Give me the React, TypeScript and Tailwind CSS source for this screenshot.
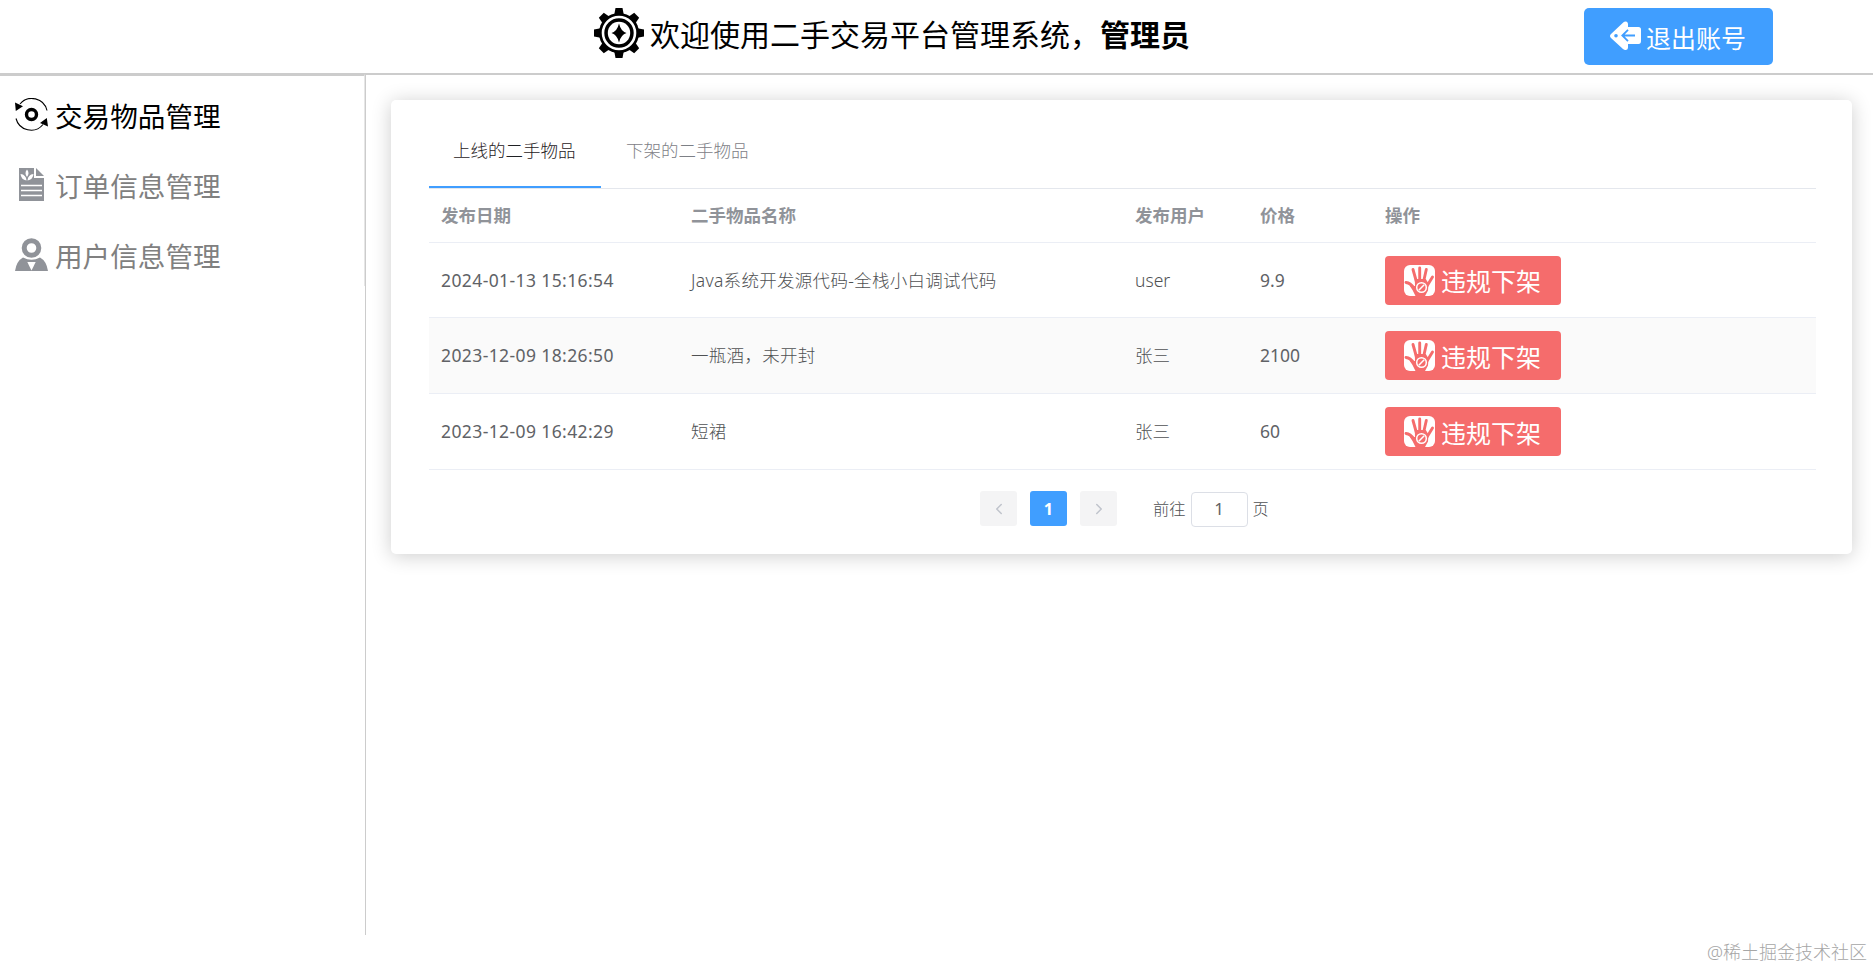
import { ChevronLeft, ChevronRight } from 'lucide-react';

const items = [
  {
    date: '2024-01-13 15:16:54',
    name: 'Java系统开发源代码-全栈小白调试代码',
    user: 'user',
    price: '9.9',
  },
  {
    date: '2023-12-09 18:26:50',
    name: '一瓶酒，未开封',
    user: '张三',
    price: '2100',
  },
  { date: '2023-12-09 16:42:29', name: '短裙', user: '张三', price: '60' },
];

const GearIcon = () => (
  <svg className="size-[50px] shrink-0" viewBox="0 0 50 50">
    {[0, 45, 90, 135, 180, 225, 270, 315].map((angle) => (
      <path
        key={angle}
        d="M21.5 0h7l1.5 8H20z"
        transform={`rotate(${angle} 25 25)`}
      />
    ))}
    <circle cx="25" cy="25" r="20" />
    <circle cx="25" cy="25" r="16" fill="none" stroke="#fff" strokeWidth="2.6" />
    <circle cx="25" cy="25" r="11.2" fill="#fff" />
    <path d="M25 15.5q1.8 7.7 7.5 9.5-5.7 1.8-7.5 9.5-1.8-7.7-7.5-9.5 5.7-1.8 7.5-9.5z" />
  </svg>
);

const BackIcon = () => (
  <svg className="-mt-0.5 w-[31px] h-[30px] shrink-0" viewBox="0 0 31 30">
    <path
      fill="#fff"
      d="M1 13 13.5 1.2Q15 0 16.8.8 18 1.5 18 3v3h10.5Q31 6 31 8.5V20Q31 23 28.5 23H18v3.5Q18 28.5 16 29q-1.5.4-3-1L1 17Q-1 15 1 13z"
    />
    <circle cx="6" cy="14.7" r="1.8" fill="#409eff" />
    <path
      d="M25 14.5H12.5M18 8.8l-5.7 5.7 5.7 5.7"
      fill="none"
      stroke="#409eff"
      strokeWidth="1.8"
    />
  </svg>
);

const TradeIcon = () => (
  <svg className="-mt-[3px] w-[33px] h-[33px] shrink-0" viewBox="0 0 33 33">
    <path
      d="M5 6A15.5 15.5 0 0 1 32 12.5M1 20.5A15.5 15.5 0 0 0 28 26.5"
      fill="none"
      stroke="#000"
      strokeWidth="1.1"
    />
    <path d="M0 4.5 8 8.3.8 13zM33 28.5l-8-3.5 6.8-5z" />
    <circle cx="16.5" cy="16.5" r="5" fill="none" stroke="#000" strokeWidth="3.4" />
  </svg>
);

const OrderIcon = () => (
  <svg className="-mt-[3px] w-[33px] h-[33px] shrink-0" viewBox="0 0 33 33">
    <path fill="#909399" d="M4 0h15v10h10v23H4zM21 0l8 8h-8z" />
    <path
      fill="#fff"
      d="M12 1.5q3 3.5 0 7.5-3-4 0-7.5zM5.5 6q5.5.5 6 6.5-5.5-1-6-6.5zM18.5 6q-5.5.5-6 6.5 5.5-1 6-6.5z"
    />
    <path d="M6 17.5h21M6 22.5h21M6 27.5h21" stroke="#fff" strokeWidth="1.5" />
  </svg>
);

const UserIcon = () => (
  <svg className="-mt-[3px] w-[33px] h-[33px] shrink-0" viewBox="0 0 33 33">
    <circle cx="16.5" cy="10" r="7.3" fill="none" stroke="#909399" strokeWidth="5" />
    <path fill="#909399" d="M8 19.5Q16.5 24 25 19.5q6.5 3.5 8 13.5H0Q1.5 23 8 19.5z" />
    <path fill="#fff" d="M12.3 24h8.4l-4.2 8.5z" />
  </svg>
);

const BanIcon = () => (
  <svg className="w-[31px] h-[31px] shrink-0" viewBox="0 0 31 31">
    <rect width="31" height="31" rx="6" fill="#fff" />
    <g fill="none" stroke="#f56c6c" strokeLinecap="round" strokeWidth="2.9">
      <path d="M9 4.5 12.5 17M15.7 3V16M22.3 4.5 19.5 17M28.5 12 23 21" />
      <path d="M2 17.5q4.5.5 8 5.5" />
    </g>
    <path
      fill="#f56c6c"
      d="M10.8 14h11l2.7 4.5-.5 7L21 31H11.5Q9 25 5.5 20.5L11 21z"
    />
    <circle cx="17.5" cy="22.5" r="4.8" fill="none" stroke="#fff" strokeWidth="1.5" />
    <path d="m14.8 25.2 5.4-5.4" stroke="#fff" strokeWidth="1.5" />
  </svg>
);

const Header = () => {
  return (
    <header className="flex h-[75px] shrink-0 border-b-2 border-[#ccc] pt-2">
      <div className="flex w-[1584px] items-start pl-[594px]">
        <GearIcon />
        <h1 className="ml-1.5 mt-[5px] text-[30px] leading-[44px] font-normal whitespace-nowrap text-black">
          欢迎使用二手交易平台管理系统，<b className="font-bold">管理员</b>
        </h1>
      </div>
      <button className="flex h-[57px] w-[189px] items-center rounded-[5px] bg-[#409eff] pl-[26px] text-[25px] font-normal text-white">
        <BackIcon />
        <span className="ml-[5px] mt-1">退出账号</span>
      </button>
    </header>
  );
};

const Sidebar = () => {
  return (
    <aside className="-mt-px h-[861px] w-[366px] shrink-0 border-r border-[#ccc]">
      <nav className="flex h-[212px] flex-col border-t-2 border-r border-t-[#ccc] border-r-[#e6e6e6] pl-[15px] text-[27.6px] font-normal text-[#808080]">
        <a className="mt-[5px] flex h-[70px] shrink-0 items-center text-black">
          <TradeIcon />
          <span className="ml-[7px] mt-0.5">交易物品管理</span>
        </a>
        <a className="flex h-[70px] shrink-0 items-center">
          <OrderIcon />
          <span className="ml-[7px] mt-0.5">订单信息管理</span>
        </a>
        <a className="flex h-[70px] shrink-0 items-center">
          <UserIcon />
          <span className="ml-[7px] mt-0.5">用户信息管理</span>
        </a>
      </nav>
    </aside>
  );
};

const ItemTable = () => {
  return (
    <table className="w-full table-fixed border-collapse text-left text-[17.5px] text-[#4f5153]">
      <colgroup>
        <col className="w-[250px]" />
        <col className="w-[444px]" />
        <col className="w-[125px]" />
        <col className="w-[125px]" />
        <col />
      </colgroup>
      <thead>
        <tr className="h-[53.4px] border-b border-[#ebeef5] text-[#909399]">
          <th className="px-3">发布日期</th>
          <th className="px-3">二手物品名称</th>
          <th className="px-3">发布用户</th>
          <th className="px-3">价格</th>
          <th className="px-3">操作</th>
        </tr>
      </thead>
      <tbody>
        {items.map((item) => (
          <tr
            key={item.date}
            className="h-[75.6px] border-b border-[#ebeef5] even:bg-[#fafafa]"
          >
            <td className="px-3 pb-px font-normal tracking-[0.4px] whitespace-nowrap text-[#606266]">
              {item.date}
            </td>
            <td className="px-3 pb-px tracking-[0.3px] whitespace-nowrap">
              {item.name}
            </td>
            <td className="px-3 pb-px">{item.user}</td>
            <td className="px-3 pb-px font-normal text-[#606266]">{item.price}</td>
            <td className="px-3">
              <button className="flex h-[49px] w-[176px] items-center rounded-[4px] bg-[#f56c6c] pl-[19px] text-[25px] font-normal text-white">
                <BanIcon />
                <span className="ml-1.5 mt-1">违规下架</span>
              </button>
            </td>
          </tr>
        ))}
      </tbody>
    </table>
  );
};

const Pagination = () => {
  return (
    <div className="mt-[21.6px] flex h-[37px] items-start pl-[551px] text-[16.25px] text-[#4f5153]">
      <button className="flex h-[35px] w-[37px] items-center justify-center rounded-[3px] bg-[#f4f4f5] text-[#c0c4cc]">
        <ChevronLeft size={18} />
      </button>
      <button className="ml-[13px] h-[35px] w-[37px] rounded-[3px] bg-[#409eff] font-bold text-white">
        1
      </button>
      <button className="ml-[13px] flex h-[35px] w-[37px] items-center justify-center rounded-[3px] bg-[#f4f4f5] text-[#c0c4cc]">
        <ChevronRight size={18} />
      </button>
      <span className="ml-9 leading-[37px]">前往</span>
      <span className="ml-[5px] mt-px h-[35px] w-[57px] rounded-[4px] border border-[#dcdfe6] text-center text-[17px] leading-[31px] font-normal text-[#606266]">
        1
      </span>
      <span className="ml-[5px] leading-[37px]">页</span>
    </div>
  );
};

export default function App() {
  return (
    <div className="flex h-[969px] flex-col overflow-hidden bg-white font-['Noto_Sans','Noto_Sans_CJK_SC',sans-serif] font-light">
      <Header />
      <div className="flex h-[860px]">
        <Sidebar />
        <main className="ml-[25px] mt-[25px] h-[454px] w-[1461px] rounded-[5px] bg-white pt-[25px] pr-[36px] pl-[38px] shadow-[0_2px_20px_rgba(0,0,0,0.2)]">
          <div className="flex h-16 border-b border-[#e4e7ed] text-[17.5px] leading-[50px]">
            <div className="h-[63px] w-[172px] border-b-2 border-[#409eff] pl-6 text-[#1f2124]">
              上线的二手物品
            </div>
            <div className="pl-[25px] text-[#7d8086]">下架的二手物品</div>
          </div>
          <ItemTable />
          <Pagination />
        </main>
      </div>
      <footer className="pr-[6px] pt-[5px] text-right text-[18px] leading-6 text-[#a6a6a6]">
        @稀土掘金技术社区
      </footer>
    </div>
  );
}
